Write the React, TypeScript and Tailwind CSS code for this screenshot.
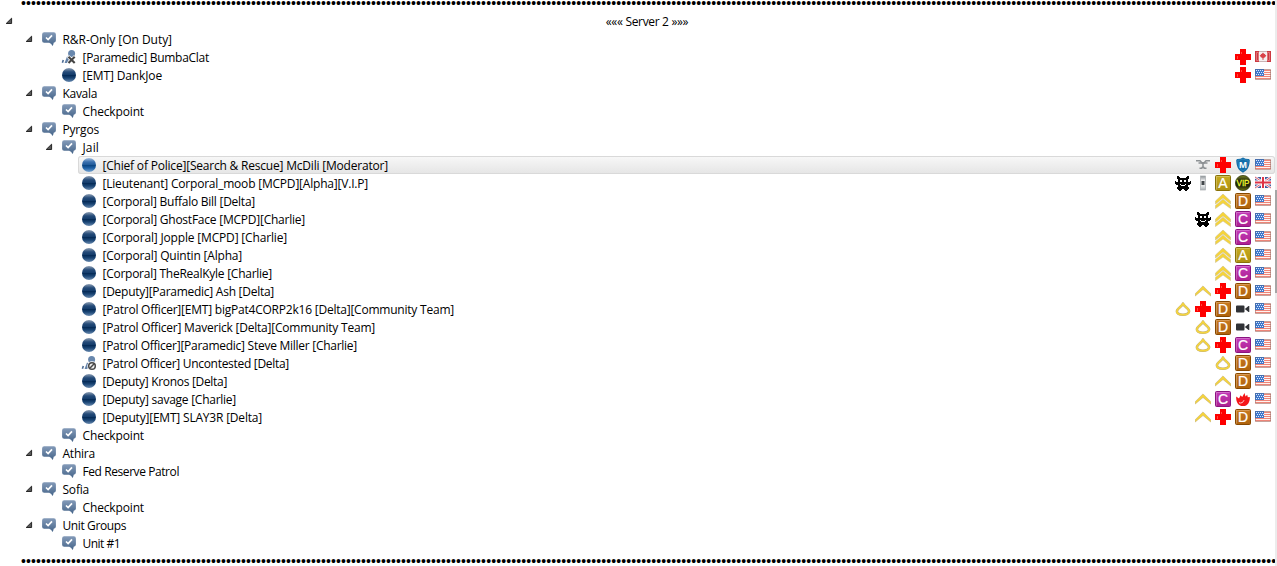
import { useLayoutEffect, useRef } from "react";

type Status = "channel" | "user" | "talking" | "away" | "blocked";

type Item = {
  level: number;
  name: string;
  width: number;
  icon: Status;
  open?: boolean;
  selected?: boolean;
  badges?: string[];
};

const items: Item[] = [
  { level: 1, name: "R&R-Only [On Duty]", width: 109, icon: "channel", open: true },
  { level: 2, name: "[Paramedic] BumbaClat", width: 126, icon: "away", badges: ["cross", "ca"] },
  { level: 2, name: "[EMT] DankJoe", width: 79, icon: "user", badges: ["cross", "us"] },
  { level: 1, name: "Kavala", width: 34, icon: "channel", open: true },
  { level: 2, name: "Checkpoint", width: 61, icon: "channel" },
  { level: 1, name: "Pyrgos", width: 36, icon: "channel", open: true },
  { level: 2, name: "Jail", width: 16, icon: "channel", open: true },
  { level: 3, name: "[Chief of Police][Search & Rescue] McDili [Moderator]", width: 285, icon: "talking", selected: true, badges: ["eagle", "cross", "mod", "us"] },
  { level: 3, name: "[Lieutenant] Corporal_moob [MCPD][Alpha][V.I.P]", width: 265, icon: "user", badges: ["monster", "bar", "A", "vip", "gb"] },
  { level: 3, name: "[Corporal] Buffalo Bill [Delta]", width: 152, icon: "user", badges: ["corporal", "D", "us"] },
  { level: 3, name: "[Corporal] GhostFace [MCPD][Charlie]", width: 202, icon: "user", badges: ["monster", "corporal", "C", "us"] },
  { level: 3, name: "[Corporal] Jopple [MCPD] [Charlie]", width: 184, icon: "user", badges: ["corporal", "C", "us"] },
  { level: 3, name: "[Corporal] Quintin [Alpha]", width: 139, icon: "user", badges: ["corporal", "A", "us"] },
  { level: 3, name: "[Corporal] TheRealKyle [Charlie]", width: 169, icon: "user", badges: ["corporal", "C", "us"] },
  { level: 3, name: "[Deputy][Paramedic] Ash [Delta]", width: 171, icon: "user", badges: ["deputy", "cross", "D", "us"] },
  { level: 3, name: "[Patrol Officer][EMT] bigPat4CORP2k16 [Delta][Community Team]", width: 351, icon: "user", badges: ["officer", "cross", "D", "video", "us"] },
  { level: 3, name: "[Patrol Officer] Maverick [Delta][Community Team]", width: 272, icon: "user", badges: ["officer", "D", "video", "us"] },
  { level: 3, name: "[Patrol Officer][Paramedic] Steve Miller [Charlie]", width: 254, icon: "user", badges: ["officer", "cross", "C", "us"] },
  { level: 3, name: "[Patrol Officer] Uncontested [Delta]", width: 186, icon: "blocked", badges: ["officer", "D", "us"] },
  { level: 3, name: "[Deputy] Kronos [Delta]", width: 124, icon: "user", badges: ["deputy", "D", "us"] },
  { level: 3, name: "[Deputy] savage [Charlie]", width: 133, icon: "user", badges: ["deputy", "C", "flame", "us"] },
  { level: 3, name: "[Deputy][EMT] SLAY3R [Delta]", width: 159, icon: "user", badges: ["deputy", "cross", "D", "us"] },
  { level: 2, name: "Checkpoint", width: 61, icon: "channel" },
  { level: 1, name: "Athira", width: 32, icon: "channel", open: true },
  { level: 2, name: "Fed Reserve Patrol", width: 96, icon: "channel" },
  { level: 1, name: "Sofia", width: 26, icon: "channel", open: true },
  { level: 2, name: "Checkpoint", width: 61, icon: "channel" },
  { level: 1, name: "Unit Groups", width: 63, icon: "channel", open: true },
  { level: 2, name: "Unit #1", width: 37, icon: "channel" },
];

const indent: Record<number, string> = { 1: "pl-[22px]", 2: "pl-[42px]", 3: "pl-[62px]" };

function Label({ text, width }: { text: string; width: number }) {
  const ref = useRef<HTMLSpanElement>(null);

  useLayoutEffect(() => {
    const el = ref.current;
    if (!el) return;
    el.style.letterSpacing = "0px";
    const natural = el.getBoundingClientRect().width;
    el.style.letterSpacing = `${(width + 0.5 - natural) / text.length}px`;
  }, [text, width]);

  return (
    <span ref={ref} className="whitespace-pre">
      {text}
    </span>
  );
}

function Arrow() {
  return (
    <svg width="8" height="8" viewBox="0 0 8 8" className="shrink-0">
      <path d="M6.6 1.2v5.3H1.2z" fill="#595959" stroke="#262626" strokeWidth="1" strokeLinejoin="round" />
    </svg>
  );
}

function StatusIcon({ kind }: { kind: Status }) {
  if (kind === "channel") {
    return (
      <svg width="16" height="16" viewBox="0 0 16 16" className="shrink-0">
        <path d="M3.2 1.3h9.600q2.100 0 2.100 2.100v6.200q0 2.100-2.200 2.200-.1 1.800-1.300 3.200-.6-2.400-3.200-3.200H3.200q-2.100 0-2.100-2.100V3.400q0-2.100 2.100-2.100z" fill="url(#bubble)" />
        <path d="M5 6.500l2.100 2 3.900-4.200" fill="none" stroke="#fff" strokeWidth="1.700" />
      </svg>
    );
  }
  if (kind === "user" || kind === "talking") {
    return (
      <svg width="16" height="16" viewBox="0 0 16 16" className="shrink-0">
        <circle cx="8" cy="8" r="7" fill={kind === "user" ? "url(#ball)" : "url(#ballOn)"} />
      </svg>
    );
  }
  return (
    <svg width="16" height="16" viewBox="0 0 16 16" className="shrink-0">
      <circle cx="10.6" cy="4.6" r="3.5" fill="#6887ad" />
      <path d="M6 7.400l2.600 1.600-2.400 5H3.600z" fill="#6582a7" />
      <path d="M2.300 11l-.9 2.800" stroke="#4d6c95" strokeWidth="1.600" />
      {kind === "away" ? (
        <g fill="none">
          <path d="M7.200 7.500l6.800 6.800M14 7.500l-6.800 6.800" stroke="#fff" strokeWidth="3.200" />
          <path d="M7.500 7.800l6.200 6.200M13.700 7.800L7.500 14" stroke="#444" strokeWidth="2.100" />
        </g>
      ) : (
        <g fill="#eee" stroke="#484848" strokeWidth="1.500">
          <circle cx="11" cy="11" r="4" stroke="#fff" />
          <circle cx="11" cy="11" r="3.300" />
          <path d="M8.800 13.200l4.400-4.400" />
        </g>
      )}
    </svg>
  );
}

function Letter({ char, fill, stroke }: { char: string; fill: string; stroke: string }) {
  return (
    <>
      <rect x=".5" y=".5" width="15" height="15" rx="1" fill={fill} stroke={stroke} />
      <path d="M1.5 14.5v-13h13" fill="none" stroke="#fff" opacity=".25" />
      <text x="8" y="12.900" textAnchor="middle" fill="#fff" stroke="#fff" strokeWidth=".2" fontSize="14" fontFamily="Liberation Sans, sans-serif">
        {char}
      </text>
    </>
  );
}

const monster = [
  "................",
  "..##........##..",
  "..###......###..",
  "..############..",
  "...##########...",
  "...##..##..##...",
  "#..##..##..##..#",
  "################",
  "################",
  ".####.####.####.",
  "...###....###...",
  "...##########...",
  "..############..",
  "..############..",
  "...####..####...",
  "....##....##....",
];

const usStripes = [0, 2, 4, 6, 8];

function Badge({ kind }: { kind: string }) {
  return (
    <svg width="16" height="16" viewBox="0 0 16 16" className="shrink-0">
      {kind === "cross" && (
        <>
          <path d="M5 0h6v5h5v6h-5v5H5v-5H0V5h5z" fill="#fe0000" />
          <path d="M6.5 3v2M2.5 7v3" stroke="#ff4a3c" />
        </>
      )}
      {kind === "us" && (
        <>
          <path d="M0 2h16v11H0z" fill="#fff2ee" />
          {usStripes.map((y) => (
            <rect key={y} x="0" y={y + 3} width="16" height="1" fill="#ee8578" />
          ))}
          <path d="M0 2h9v7H0z" fill="#3f78cc" />
          <path d="M1 3.5h8M2 5.5h7M1 7.5h8" stroke="#dceafa" strokeDasharray="1 1" />
          <path d="M.5 2.5h15v10H.5z" fill="none" stroke="#a67870" strokeOpacity=".65" />
          <path d="M0 2.5h9M.5 2v7" stroke="#466fae" />
        </>
      )}
      {kind === "ca" && (
        <>
          <path d="M0 2h16v11H0z" fill="#f5f1f1" />
          <path d="M0 2h4v11H0zM12 2h4v11h-4z" fill="#cc3941" />
          <path d="M1.500 3.500h2v8h-2zM12.500 3.500h2v8h-2z" fill="none" stroke="#e78d90" strokeWidth=".7" />
          <path d="M4 2.500h8M4 12.500h8" stroke="#c9b4b4" />
          <path d="M8 3.500l1.200 1.500 1-.3-.1 1.300 1.300.3-1.300 2-1.600.8.1 1.600H7.400l.1-1.600-1.600-.8-1.300-2 1.300-.3-.1-1.300 1 .3z" fill="#d94248" />
        </>
      )}
      {kind === "gb" && (
        <>
          <path d="M0 2h16v11H0z" fill="#425a9d" />
          <path d="M0 2l16 11M16 2L0 13" stroke="#f4f4fa" strokeWidth="2.400" />
          <path d="M0 2l16 11M16 2L0 13" stroke="#d94d5c" strokeWidth=".9" />
          <path d="M8 2v11M0 7.500h16" stroke="#fff" strokeWidth="4" />
          <path d="M8 2v11M0 7.500h16" stroke="#de3346" strokeWidth="2" />
        </>
      )}
      {kind === "A" && <Letter char="A" fill="url(#tagA)" stroke="#877108" />}
      {kind === "C" && <Letter char="C" fill="url(#tagC)" stroke="#8a1480" />}
      {kind === "D" && <Letter char="D" fill="url(#tagD)" stroke="#874800" />}
      {kind === "corporal" && (
        <g>
          <path d="M8 1l7.500 7v3L8 5 .5 11V8z" fill="#f6d43a" stroke="#cdbf8a" strokeWidth=".6" />
          <path d="M8 6.200l7.500 6.300v3L8 10 .5 15.500v-3z" fill="#f6d43a" stroke="#cdbf8a" strokeWidth=".6" />
        </g>
      )}
      {kind === "deputy" && (
        <path d="M8 2.900l7.800 7.800v2.300L8 6.500.2 13v-2.300z" fill="#f6d43a" stroke="#c4b070" strokeWidth=".6" />
      )}
      {kind === "officer" && (
        <g fill="none" strokeLinejoin="round">
          <path d="M8 2.600C7 5.600 1.900 7.300 1.900 10.300c0 4.600 12.200 4.600 12.200 0C14.100 7.300 9 5.600 8 2.600z" stroke="#c2b074" strokeWidth="2.600" />
          <path d="M8 2.600C7 5.600 1.900 7.300 1.900 10.300c0 4.600 12.200 4.600 12.200 0C14.100 7.300 9 5.600 8 2.600z" stroke="#f5d53f" strokeWidth="1.700" />
        </g>
      )}
      {kind === "eagle" && (
        <g fill="none" stroke="#8d9194">
          <path d="M1 3.700h4l1.800 2h2.400l1.800-2h4" strokeWidth="1.600" />
          <path d="M3.500 6h3l1.500.8L9.500 6h3" strokeWidth="1.300" />
          <path d="M8 5v6.500M4.500 11.300h2L8 9.500l1.500 1.800h2" strokeWidth="1.500" />
        </g>
      )}
      {kind === "mod" && (
        <>
          <path d="M8 .5q2.500 1.700 5.900 1.600l.9 1c-.3 6.200-1.700 10.200-6.800 12.600C2.900 13.300 1.500 9.300 1.200 3.100l.9-1Q5.500 2.200 8 .5z" fill="#126da9" />
          <path d="M8 2q2.400 1.300 5.200 1.200c-.2 5-1.400 8.400-5.200 10.700C4.200 11.600 3 8.200 2.800 3.200Q5.600 3.300 8 2z" fill="none" stroke="#6ab1d8" strokeWidth=".3" />
          <text x="8" y="11" textAnchor="middle" fill="#fff" fontSize="9.500" fontWeight="700" fontFamily="Liberation Sans, sans-serif">
            M
          </text>
        </>
      )}
      {kind === "vip" && (
        <>
          <circle cx="8" cy="8" r="7.600" fill="url(#vip)" stroke="#353b0c" strokeWidth=".8" />
          <text x="8" y="11.400" textAnchor="middle" textLength="13" lengthAdjust="spacingAndGlyphs" fill="#f4fb2e" stroke="#f4fb2e" strokeWidth=".3" fontSize="9.500" fontFamily="Liberation Sans, sans-serif">
            VIP
          </text>
        </>
      )}
      {kind === "bar" && (
        <>
          <rect x="5.500" y="1" width="5" height="14" fill="url(#metal)" stroke="#a8adb0" strokeWidth=".7" />
          <path d="M6.500 6h3v4h-3z" fill="#44484b" />
        </>
      )}
      {kind === "monster" && (
        <path
          d={monster
            .flatMap((row, y) => [...row].map((c, x) => (c === "#" ? `M${x} ${y}h1v1h-1z` : "")))
            .join("")}
          fill="#000"
          shapeRendering="crispEdges"
        />
      )}
      {kind === "video" && (
        <path d="M2 4.500h6.500q1 0 1 1v5q0 1-1 1H2q-1 0-1-1v-5q0-1 1-1zM9.800 8l3.700-3h.8v6h-.8z" fill="#303236" />
      )}
      {kind === "flame" && (
        <>
          <path d="M1.200 5.500l2.800 2 1.600-3.200L7.200 6l2.300-4 1 3.500 1.700-1.800.6 2.600 2-.4c.3 5-2 9-6.700 9.200-5 .1-7.300-4.500-6.900-9.600z" fill="#f51618" />
          <path d="M4 11.700c2 1 4.400-.4 5-2.500" stroke="#fff" strokeWidth=".8" fill="none" />
        </>
      )}
    </svg>
  );
}

function Gradient({ id, stops }: { id: string; stops: [number, string][] }) {
  return (
    <linearGradient id={id} x1="0" y1="0" x2="0" y2="1">
      {stops.map(([offset, color]) => (
        <stop key={offset} offset={offset} stopColor={color} />
      ))}
    </linearGradient>
  );
}

function Defs() {
  return (
    <svg width="0" height="0" className="absolute">
      <defs>
        <Gradient id="bubble" stops={[[0, "#839ab8"], [1, "#456489"]]} />
        <Gradient id="ball" stops={[[0, "#8e9fb5"], [0.28, "#254b79"], [0.47, "#153d6c"], [0.5, "#022752"], [0.72, "#1b4676"], [1, "#6a8bb0"]]} />
        <Gradient id="ballOn" stops={[[0, "#a5bfdf"], [0.28, "#3a70ae"], [0.47, "#235c9b"], [0.5, "#08427d"], [0.72, "#1f61a6"], [1, "#79a6d2"]]} />
        <Gradient id="tagA" stops={[[0, "#c7ab20"], [1, "#ae9112"]]} />
        <Gradient id="tagC" stops={[[0, "#c33cba"], [1, "#ad208f"]]} />
        <Gradient id="tagD" stops={[[0, "#c97a20"], [1, "#ae620d"]]} />
        <Gradient id="vip" stops={[[0, "#7a8524"], [0.35, "#20250c"], [0.7, "#20250c"], [1, "#717c14"]]} />
        <Gradient id="metal" stops={[[0, "#8b9196"], [0.35, "#f5f5f5"], [0.7, "#e6e8e9"], [1, "#a9afb3"]]} />
      </defs>
    </svg>
  );
}

function Dots() {
  return (
    <div className="pl-[21px] font-['Liberation_Sans'] text-[14px] leading-[6px] tracking-[0.1px] whitespace-nowrap">
      {"•".repeat(251)}
    </div>
  );
}

export default function App() {
  return (
    <div className="flex h-[566px] w-[1277px] overflow-hidden bg-white font-['Open_Sans',sans-serif] text-[12px] leading-[18px] text-black">
      <Defs />
      <div className="w-[1275px] shrink-0">
        <div className="h-3">
          <Dots />
        </div>
        <div className="flex h-[18px] items-center pl-[5px]">
          <Arrow />
          <div className="flex flex-1 justify-center pt-px pl-[6px]">
            <Label text="««« Server 2 »»»" width={82} />
          </div>
        </div>
        {items.map((item, i) => (
          <div key={i} className={`flex h-[18px] items-center ${indent[item.level]}`}>
            <div className="flex w-4 shrink-0 pl-[3px]">{item.open && <Arrow />}</div>
            <div
              className={
                item.selected
                  ? "flex h-[18px] flex-1 items-center rounded-[3px] bg-linear-to-b from-[#f8f8f8] to-[#e5e5e5] pr-1 pl-[3px] inset-ring inset-ring-[#d9d9d9]"
                  : "flex h-[18px] flex-1 items-center pr-1 pl-[3px]"
              }
            >
              <StatusIcon kind={item.icon} />
              <div className="flex-1 pt-px pl-[5.5px]">
                <Label text={item.name} width={item.width} />
              </div>
              <div className="flex gap-1">
                {item.badges?.map((b) => (
                  <Badge key={b} kind={b} />
                ))}
              </div>
            </div>
          </div>
        ))}
        <div className="h-[14px] pt-[6px]">
          <Dots />
        </div>
      </div>
      <div className="w-[2px] bg-[#ececec] pt-[190px]">
        <div className="h-[103px] bg-[#a6a6a6]" />
      </div>
    </div>
  );
}
